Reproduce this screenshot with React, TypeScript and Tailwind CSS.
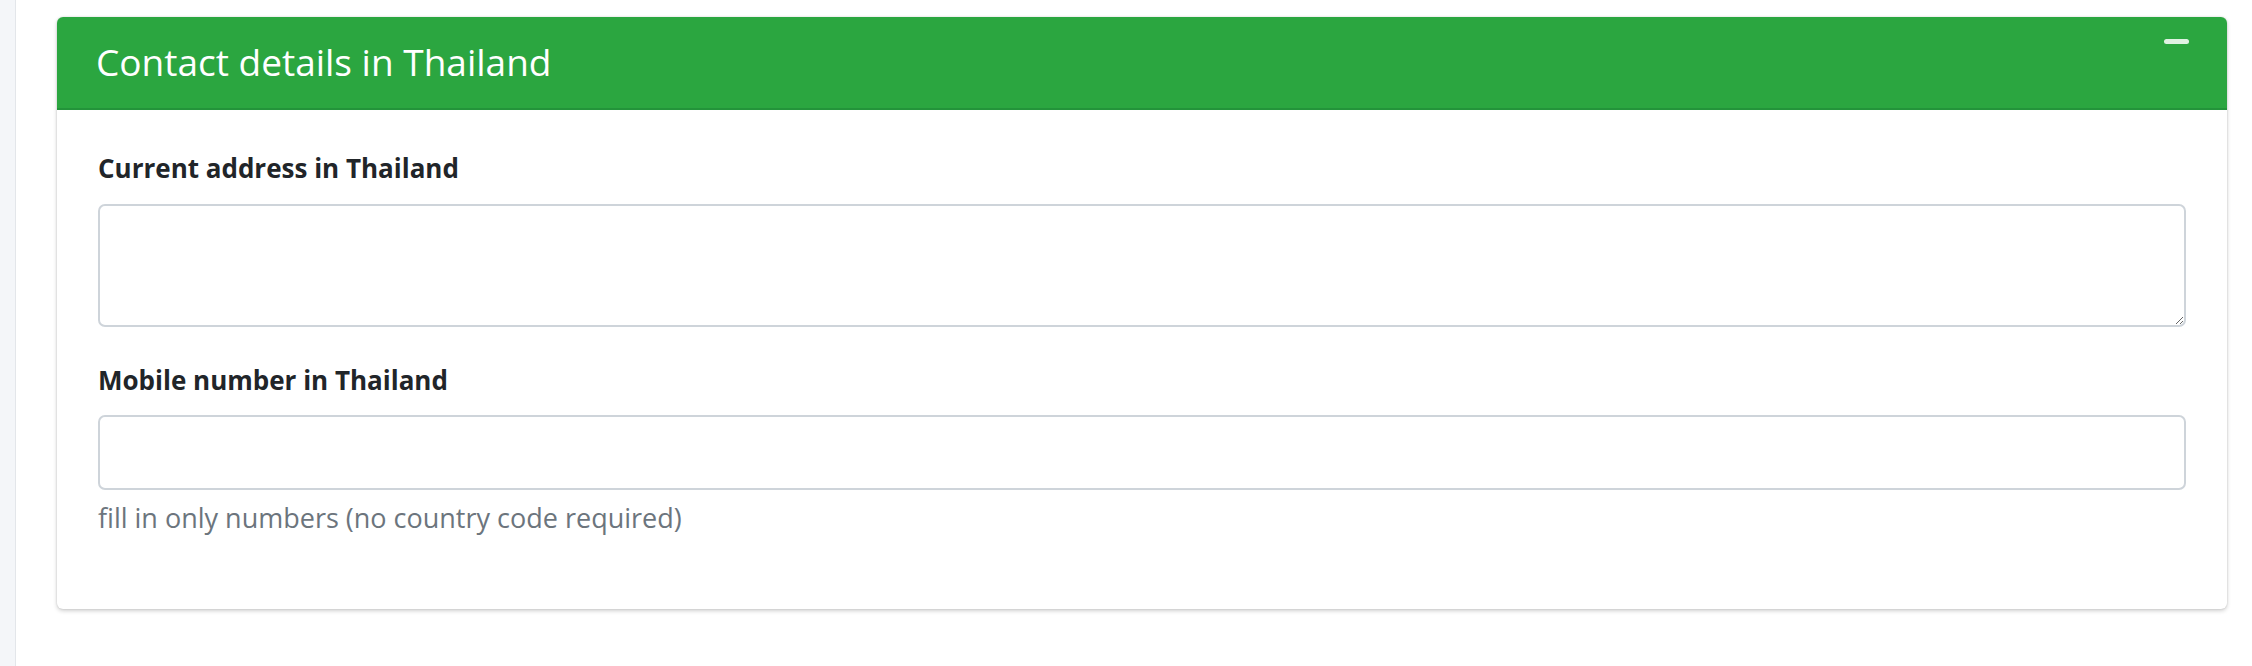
import React from 'react';

const font = { fontFamily: '"Open Sans", "Noto Sans", Arial, sans-serif' };

function CardTools() {
  return (
    <button type="button" className="absolute right-[38px] top-[22px] flex h-[5px] w-[25px] items-center justify-center">
      <span className="block h-[5px] w-[25px] rounded-full bg-white/85" />
    </button>
  );
}

export default function App() {
  return (
    <div className="flex min-h-[666px] bg-white" style={font}>
      {/* Sidebar edge */}
      <div className="w-[16px] shrink-0 border-r border-[#e3e6ea] bg-[#f4f6f9]" />

      <div className="flex-1 pl-[41px] pr-[25px] pt-[17px]">
        <div className="overflow-hidden rounded-[6px] bg-white shadow-[0_0_2px_rgba(0,0,0,0.15),0_2px_4px_rgba(0,0,0,0.18)]">
          {/* Header */}
          <div className="relative flex h-[93px] items-center border-b-[2px] border-[#23933a] bg-[#2ba640] px-[39px] pb-[3px]">
            <h3 className="text-[37px] font-normal leading-none text-white">Contact details in Thailand</h3>
            <CardTools />
          </div>

          {/* Body */}
          <div className="px-[41px] pb-[72px] pt-[40px]">
            <label className="block text-[26px] font-bold leading-[36px] text-[#212529]">
              Current address in Thailand
            </label>
            <textarea
              className="mt-[18px] block h-[123px] w-full rounded-[7px] border-[2px] border-[#ced4da] bg-white px-[18px] py-[9px] text-[24px] outline-none"
            />

            <label className="mt-[35px] block text-[26px] font-bold leading-[36px] text-[#212529]">
              Mobile number in Thailand
            </label>
            <input
              type="text"
              className="mt-[17px] block h-[75px] w-full rounded-[7px] border-[2px] border-[#ced4da] bg-white px-[18px] text-[24px] outline-none"
            />
            <p className="mt-[9px] text-[27px] leading-[38px] text-[#6c757d]">
              fill in only numbers (no country code required)
            </p>
          </div>
        </div>
      </div>
    </div>
  );
}
